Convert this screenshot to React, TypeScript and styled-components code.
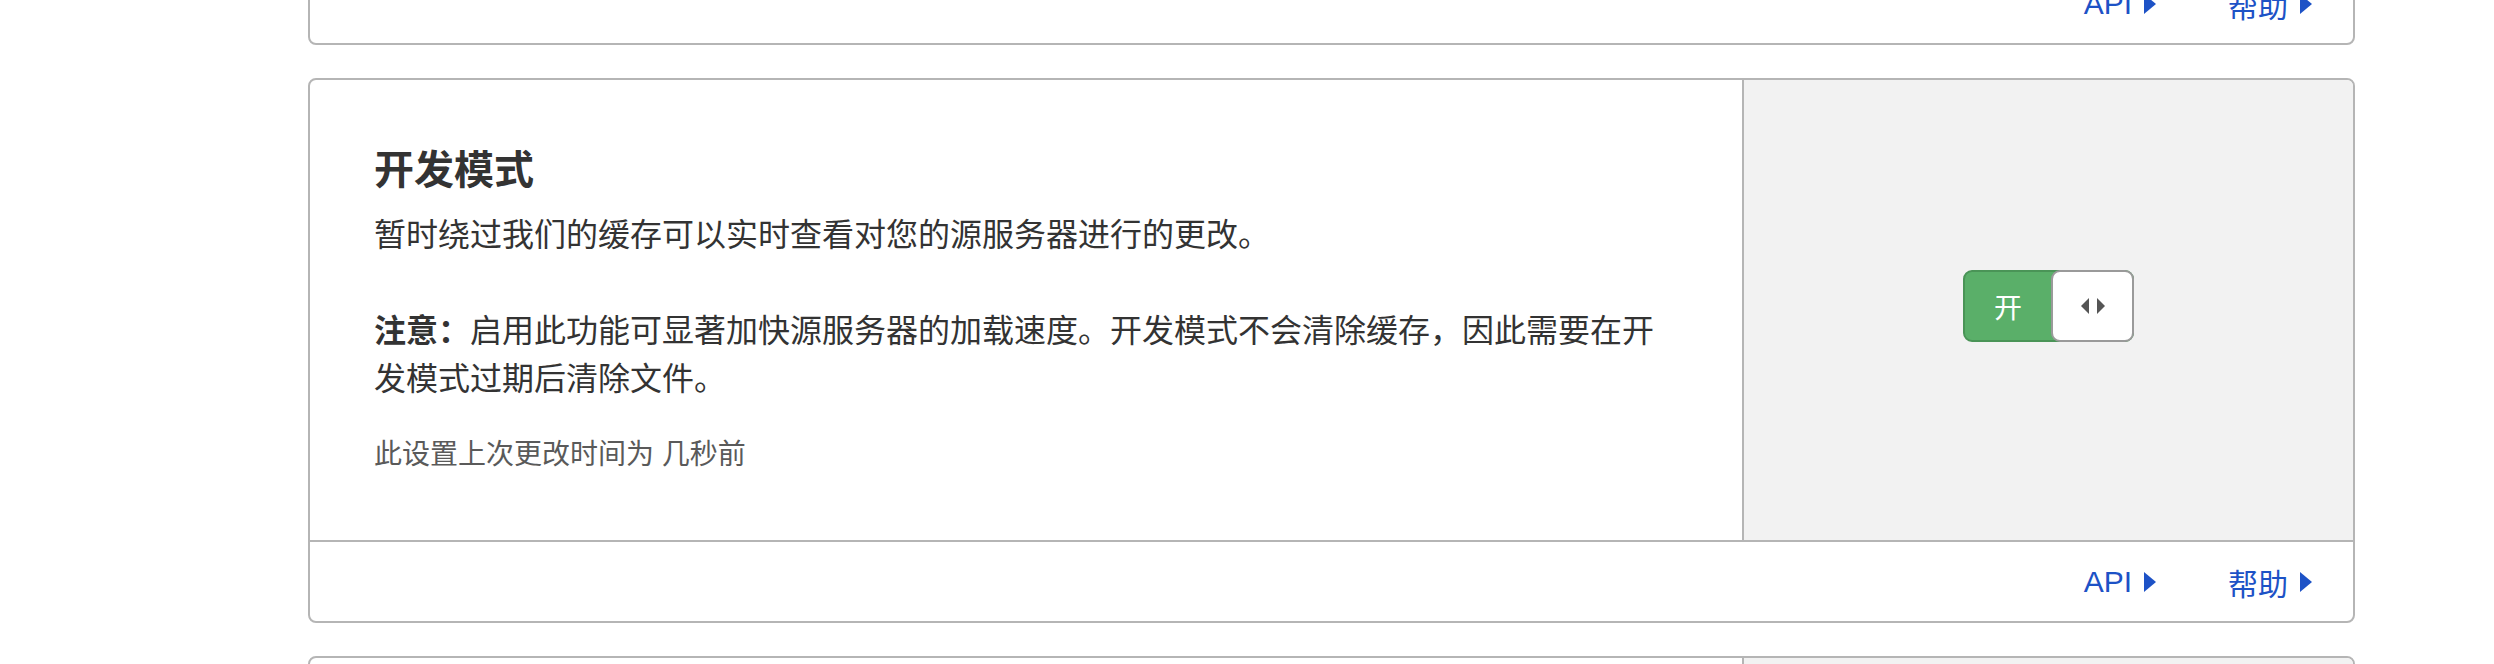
import React from 'react';
import styled, { createGlobalStyle } from 'styled-components';

const GlobalStyle = createGlobalStyle`
  html, body {
    margin: 0;
    padding: 0;
    background: #ffffff;
    overflow: hidden;
  }
  body {
    font-family: "Liberation Sans", "Noto Sans CJK SC", sans-serif;
    color: #333333;
  }
`;

const Caret = ({ color = '#1d52c6' }: { color?: string }) => (
  <svg width="12" height="20" viewBox="0 0 12 20">
    <path d="M0 0 L12 10 L0 20 Z" fill={color} />
  </svg>
);

const Arrows = () => (
  <svg width="24" height="16" viewBox="0 0 24 16">
    <path d="M8 0 L0 8 L8 16 Z" fill="#555555" />
    <path d="M16 0 L24 8 L16 16 Z" fill="#555555" />
  </svg>
);

const Toggle = ({ label }: { label: string }) => (
  <Track>
    <TrackLabel>{label}</TrackLabel>
    <Knob>
      <Arrows />
    </Knob>
  </Track>
);

const CardFooter = () => (
  <Footer>
    <FooterLink>
      API
      <Caret />
    </FooterLink>
    <FooterLink>
      帮助
      <Caret />
    </FooterLink>
  </Footer>
);

const App = () => {
  return (
    <>
      <GlobalStyle />
      <Page>
        <Card>
          <CardFooter />
        </Card>

        <Card>
          <Body>
            <Info>
              <Title>开发模式</Title>
              <Text>暂时绕过我们的缓存可以实时查看对您的源服务器进行的更改。</Text>
              <Text $gap>
                <strong>注意：</strong>
                启用此功能可显著加快源服务器的加载速度。开发模式不会清除缓存，因此需要在开发模式过期后清除文件。
              </Text>
              <Meta>此设置上次更改时间为 几秒前</Meta>
            </Info>
            <Control>
              <Toggle label="开" />
            </Control>
          </Body>
          <CardFooter />
        </Card>

        <Card>
          <Body>
            <Info>
              <Title>始终在线</Title>
              <Text>如果您的服务器宕机，访问者仍可查看网站的缓存版本。</Text>
            </Info>
            <Control>
              <Toggle label="开" />
            </Control>
          </Body>
          <CardFooter />
        </Card>
      </Page>
    </>
  );
};

export default App;

const Page = styled.div`
  display: flex;
  flex-direction: column;
  gap: 33px;
  width: 2047px;
  margin-top: -40px;
  padding-left: 308px;
`;

const Card = styled.section`
  display: flex;
  flex-direction: column;
  border: 2px solid #b5b5b5;
  border-radius: 8px;
  background: #ffffff;
  overflow: hidden;
`;

const Body = styled.div`
  display: flex;
`;

const Info = styled.div`
  flex: 1;
  padding: 64px;
`;

const Title = styled.h3`
  margin: 0 0 15px;
  font-size: 40px;
  line-height: 52px;
  font-weight: 600;
  color: #333333;
`;

const Text = styled.p<{ $gap?: boolean }>`
  margin: ${(p) => (p.$gap ? '48px 0 0' : '0')};
  font-size: 32px;
  line-height: 48px;
  color: #333333;

  strong {
    font-weight: 700;
  }
`;

const Meta = styled.p`
  margin: 31px 0 0;
  font-size: 28px;
  line-height: 42px;
  color: #5a5a5a;
`;

const Control = styled.div`
  width: 609px;
  flex-shrink: 0;
  display: flex;
  align-items: center;
  justify-content: center;
  padding-bottom: 8px;
  background: #f2f2f2;
  border-left: 2px solid #b5b5b5;
`;

const Track = styled.div`
  display: flex;
  align-items: stretch;
  width: 171px;
  height: 72px;
  box-sizing: border-box;
  border: 2px solid #4a9457;
  border-radius: 9px;
  background: #5aaf69;
`;

const TrackLabel = styled.span`
  flex: 1;
  display: flex;
  align-items: center;
  justify-content: center;
  font-size: 28px;
  color: #ffffff;
`;

const Knob = styled.span`
  width: 83px;
  margin: -2px -2px -2px 0;
  box-sizing: border-box;
  display: flex;
  align-items: center;
  justify-content: center;
  background: #ffffff;
  border: 2px solid #9a9a9a;
  border-radius: 9px;
`;

const Footer = styled.div`
  height: 79px;
  display: flex;
  align-items: center;
  justify-content: flex-end;
  gap: 72px;
  padding-right: 41px;
  border-top: 2px solid #b5b5b5;
`;

const FooterLink = styled.a`
  display: flex;
  align-items: center;
  gap: 12px;
  font-size: 30px;
  color: #1d52c6;
  text-decoration: none;
  cursor: pointer;
`;
